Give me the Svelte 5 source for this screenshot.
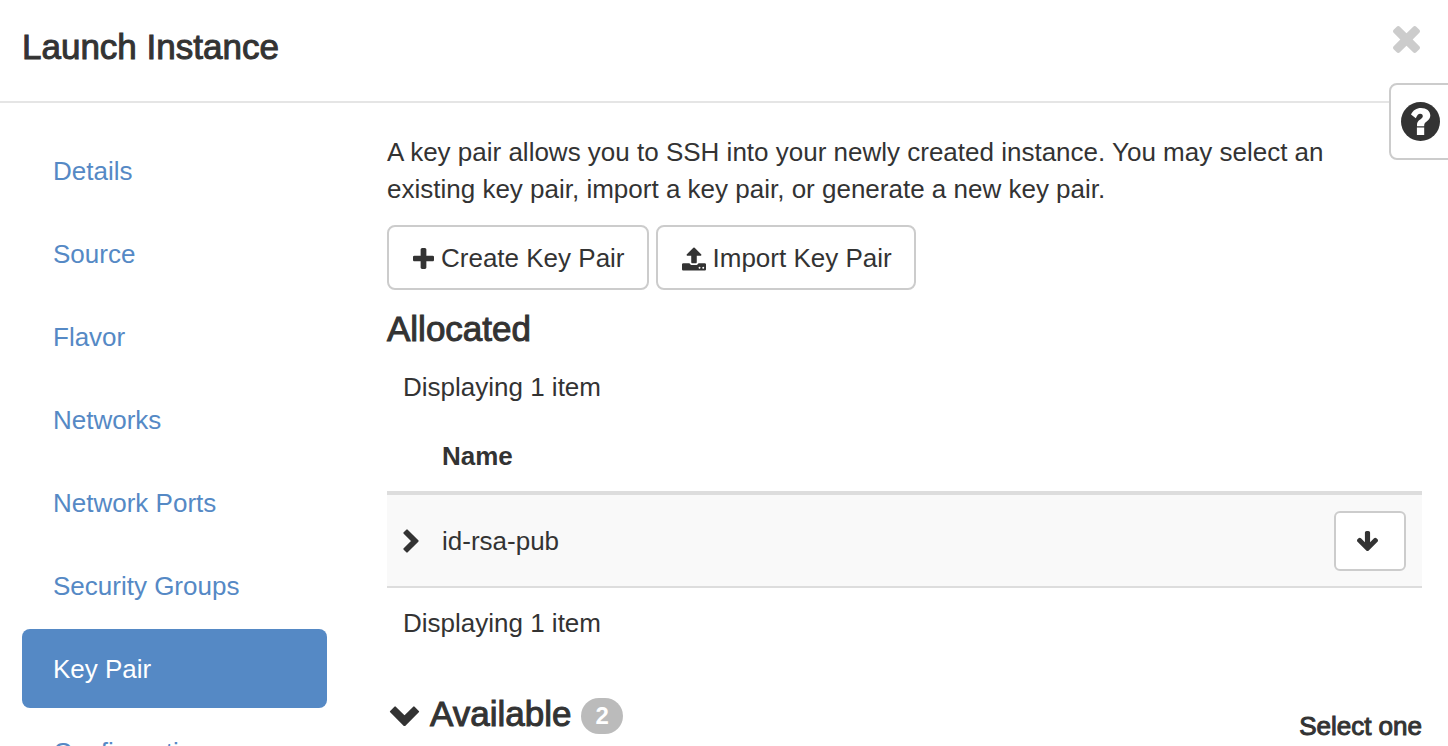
<script>
  const steps = [
    'Details',
    'Source',
    'Flavor',
    'Networks',
    'Network Ports',
    'Security Groups',
    'Key Pair',
    'Configuration'
  ];
  let active = $state('Key Pair');
  const allocated = ['id-rsa-pub'];
</script>

<div class="modal">
  <header class="modal-header">
    <h1>Launch Instance</h1>
    <button class="close" type="button" aria-label="Close">
      <svg width="27" height="27" viewBox="302 366 1188 1188" aria-hidden="true"><path d="M1490 1322q0 40-28 68l-136 136q-28 28-68 28t-68-28l-294-294-294 294q-28 28-68 28t-68-28l-136-136q-28-28-28-68t28-68l294-294-294-294q-28-28-28-68t28-68l136-136q28-28 68-28t68 28l294 294 294-294q28-28 68-28t68 28l136 136q28 28 28 68t-28 68l-294 294 294 294q28 28 28 68z" /></svg>
    </button>
  </header>

  <button class="help" type="button" aria-label="Help">
    <svg width="39" height="39" viewBox="0 0 39 39" aria-hidden="true">
      <circle cx="19.500" cy="19.500" r="19.500" />
      <path class="mark" d="M10 12.500C12 8.200 15.500 6 20 6c5.500 0 9.300 3 9.300 7.500 0 5.300-6.100 6-6.100 9.700v1.100H16v-1.500c0-5.300 5.800-5.600 5.800-8.600 0-1.600-1.200-2.400-2.600-2.400-2 0-2.900 1.400-4.400 4.500zM15.900 25.600h7.300v7.300h-7.300z" />
    </svg>
  </button>

  <div class="modal-body">
    <nav class="steps">
      {#each steps as step}
        <a
          href="#{step.toLowerCase().replace(' ', '-')}"
          class:active={step === active}
          aria-current={step === active ? 'step' : undefined}
          onclick={() => (active = step)}>{step}</a>
      {/each}
    </nav>

    <main>
      <p class="intro">
        A key pair allows you to SSH into your newly created instance. You may select an
        existing key pair, import a key pair, or generate a new key pair.
      </p>

      <div class="actions">
        <button class="btn" type="button">
          <svg width="21" height="21" viewBox="192 128 1408 1408" aria-hidden="true"><path d="M1600 736v192q0 40-28 68t-68 28h-416v416q0 40-28 68t-68 28h-192q-40 0-68-28t-28-68v-416h-416q-40 0-68-28t-28-68v-192q0-40 28-68t68-28h416v-416q0-40 28-68t68-28h192q40 0 68 28t28 68v416h416q40 0 68 28t28 68z" /></svg>
          Create Key Pair
        </button>
        <button class="btn" type="button">
          <svg width="24" height="24" viewBox="64 64 1664 1600" aria-hidden="true"><path d="M1344 1472q0-26-19-45t-45-19-45 19-19 45 19 45 45 19 45-19 19-45zm256 0q0-26-19-45t-45-19-45 19-19 45 19 45 45 19 45-19 19-45zm128-224v320q0 40-28 68t-68 28h-1472q-40 0-68-28t-28-68v-320q0-40 28-68t68-28h427q21 56 70.500 92t110.500 36h256q61 0 110.500-36t70.500-92h427q40 0 68 28t28 68zm-325-648q-17 40-59 40h-256v448q0 26-19 45t-45 19h-256q-26 0-45-19t-19-45v-448h-256q-42 0-59-40-17-39 14-69l448-448q18-19 45-19t45 19l448 448q31 30 14 69z" /></svg>
          Import Key Pair
        </button>
      </div>

      <h2 class="allocated">Allocated</h2>
      <p class="count">Displaying {allocated.length} item</p>

      <table>
        <thead>
          <tr>
            <td class="toggle"></td>
            <th scope="col">Name</th>
            <td class="move"></td>
          </tr>
        </thead>
        <tbody>
          {#each allocated as name}
            <tr>
              <td class="toggle">
                <button class="plain" type="button" aria-label="Show details">
                  <svg class="chevron" width="16" height="24" viewBox="0 0 16 24" aria-hidden="true"><path d="M4 1.400 14.600 12 4 22.600 1.400 20l8-8-8-8z" /></svg>
                </button>
              </td>
              <td>{name}</td>
              <td class="move">
                <button class="btn small" type="button" aria-label="Move to available">
                  <svg width="21" height="20" viewBox="117 128 1558 1483" aria-hidden="true"><path d="M1675 832q0 53-37 90l-651 652q-39 37-91 37-53 0-90-37l-651-652q-38-36-38-90 0-53 38-91l74-75q39-37 91-37 53 0 90 37l294 294v-704q0-52 38-90t90-38h128q52 0 90 38t38 90v704l294-294q37-37 90-37 52 0 91 37l75 75q37 39 37 91z" /></svg>
                </button>
              </td>
            </tr>
          {/each}
        </tbody>
      </table>

      <p class="count below">Displaying {allocated.length} item</p>

      <div class="available">
        <button class="plain" type="button" aria-label="Toggle available">
          <svg class="chevron" width="31" height="20" viewBox="0 0 30 20" aria-hidden="true"><path d="M1.400 5.600 15 19.200 28.600 5.600 24.400 1.400 15 10.800 5.600 1.400z" /></svg>
        </button>
        <h2>Available</h2>
        <span class="badge">2</span>
        <span class="hint">Select one</span>
      </div>
    </main>
  </div>
</div>

<style>
  :global(body) {
    margin: 0;
    background: #fff;
  }

  .modal {
    position: relative;
    height: 100vh;
    overflow: hidden;
    font: 26px/37px 'Helvetica Neue', 'Liberation Sans', Arial, sans-serif;
    color: #333;
  }

  svg {
    display: block;
    flex: none;
    fill: currentColor;
  }

  .chevron {
    stroke: currentColor;
    stroke-width: 2;
    stroke-linejoin: round;
  }

  .mark {
    fill: #fff;
  }

  button {
    font: inherit;
    color: inherit;
    cursor: pointer;
  }

  h1,
  h2 {
    margin: 0;
    font-size: 35px;
    font-weight: 400;
    line-height: 38px;
    -webkit-text-stroke: 1px currentColor;
  }

  .modal-header {
    display: flex;
    justify-content: space-between;
    align-items: flex-start;
    padding: 26px 28px 33px 22px;
    border-bottom: 2px solid #e5e5e5;
  }

  h1 {
    line-height: 42px;
  }

  .close,
  .plain {
    display: block;
    padding: 0;
    border: 0;
    background: none;
  }

  .close {
    color: #ccc;
  }

  .help {
    position: absolute;
    top: 83px;
    right: -2px;
    padding: 17px 8px 17px 10px;
    border: 2px solid #ccc;
    border-radius: 8px 0 0 8px;
    background: #fff;
  }

  .modal-body {
    display: grid;
    grid-template-columns: minmax(0, 305fr) minmax(0, 1035fr);
    gap: 60px;
    padding: 28px 26px 0 22px;
  }

  .steps {
    display: flex;
    flex-direction: column;
    gap: 4px;
  }

  .steps a {
    padding: 22px 31px 20px;
    border-radius: 8px;
    color: #5589c5;
    text-decoration: none;
  }

  .steps a.active {
    background: #5589c5;
    color: #fff;
  }

  .intro {
    margin: 3px 0 17px;
    padding-right: 64px;
  }

  .actions {
    display: flex;
    gap: 7px;
  }

  .btn {
    display: flex;
    align-items: center;
    justify-content: center;
    gap: 7px;
    padding: 13px 22px 11px 24px;
    border: 2px solid #ccc;
    border-radius: 8px;
    background: #fff;
  }

  .small {
    width: 72px;
    height: 60px;
    padding: 0 6px 0 0;
    border-radius: 6px;
  }

  .allocated {
    margin: 20px 0 21px;
  }

  .count {
    margin: 0 16px;
  }

  table {
    width: 100%;
    margin-top: 16px;
    border-collapse: separate;
    border-spacing: 0;
  }

  th,
  td {
    padding: 16px 0;
    text-align: left;
  }

  th,
  thead td {
    border-bottom: 4px solid #ddd;
  }

  tbody td {
    padding-bottom: 15px;
    background: #f9f9f9;
    border-bottom: 2px solid #ddd;
  }

  .toggle {
    width: 39px;
    padding-left: 16px;
  }

  td.move {
    width: 72px;
    padding-right: 16px;
  }

  .below {
    margin-top: 17px;
  }

  .available {
    display: flex;
    align-items: flex-start;
    margin-top: 53px;
    padding-left: 2px;
  }

  .available .plain {
    margin-top: 11px;
  }

  .available h2 {
    margin: 0 10px;
  }

  .badge {
    margin-top: 3px;
    padding: 0 14px;
    border-radius: 18px;
    background: #bbb;
    color: #fff;
    font-size: 24px;
    font-weight: 700;
    line-height: 36px;
  }

  .hint {
    margin: 13px 0 0 auto;
    -webkit-text-stroke: 1px currentColor;
  }
</style>
